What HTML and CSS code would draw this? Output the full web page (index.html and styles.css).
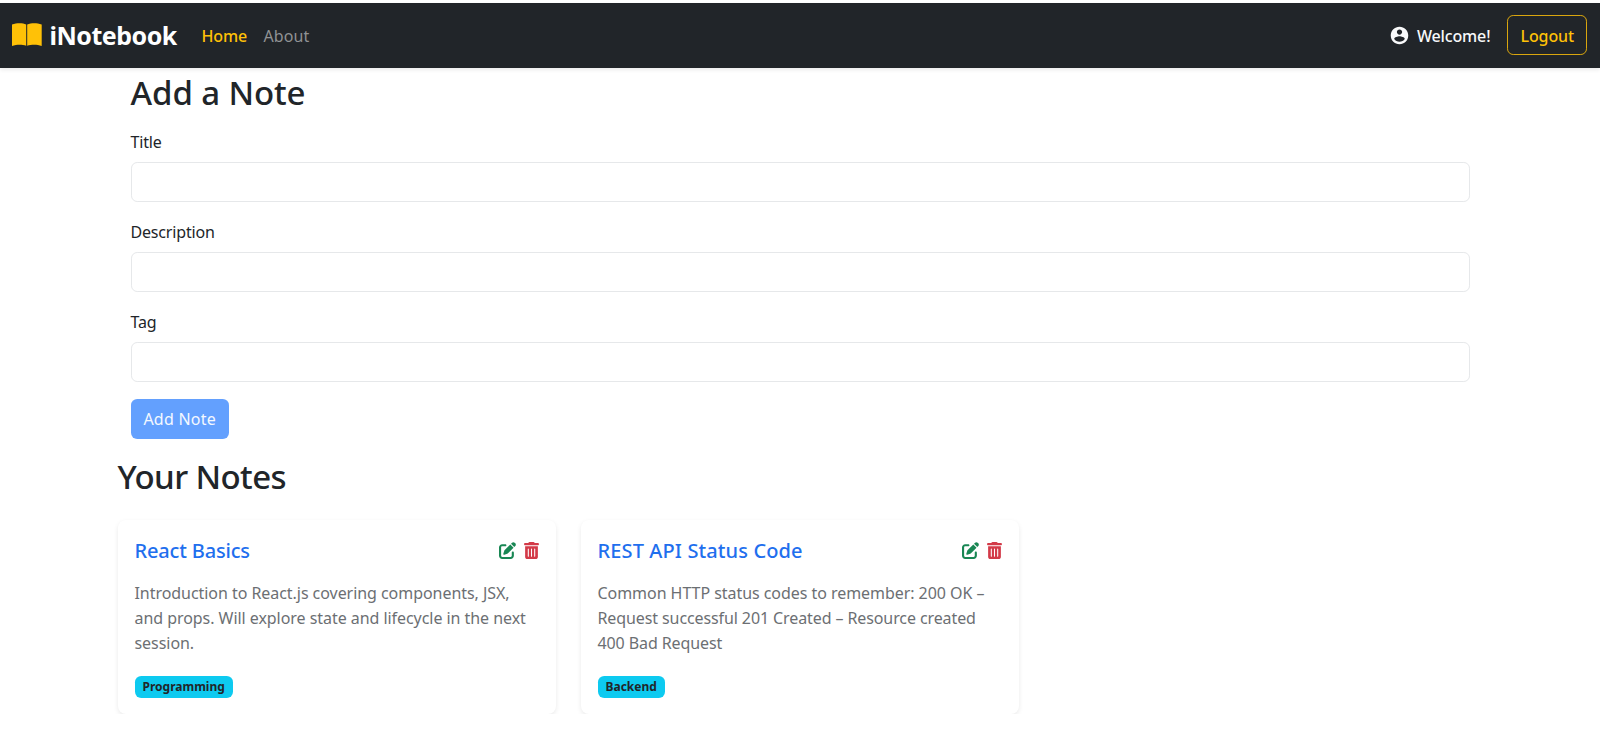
FILE: index.html
```html
<!DOCTYPE html>
<html lang="en">
<head>
<meta charset="utf-8">
<title>iNotebook</title>
<link rel="stylesheet" href="styles.css">
</head>
<body>
<svg class="sprite" aria-hidden="true">
  <symbol id="edit" viewBox="0 0 512 512"><path d="M471.600 21.700c-21.900-21.900-57.300-21.900-79.200 0L362.300 51.700l97.900 97.900 30.100-30.100c21.900-21.900 21.900-57.300 0-79.200L471.600 21.700zm-299.200 220c-6.100 6.100-10.800 13.600-13.500 21.900l-29.600 88.800c-2.900 8.600-.6 18.100 5.800 24.600s15.900 8.700 24.600 5.800l88.800-29.600c8.200-2.700 15.700-7.400 21.900-13.500L437.700 172.300 339.700 74.300 172.400 241.700zM96 64C43 64 0 107 0 160V416c0 53 43 96 96 96H352c53 0 96-43 96-96V320c0-17.700-14.300-32-32-32s-32 14.300-32 32v96c0 17.700-14.300 32-32 32H96c-17.700 0-32-14.300-32-32V160c0-17.700 14.300-32 32-32h96c17.700 0 32-14.300 32-32s-14.300-32-32-32H96z"/></symbol>
  <symbol id="trash" viewBox="0 0 448 512"><path d="M135.200 17.700C140.600 6.800 151.700 0 163.800 0H284.200c12.100 0 23.200 6.800 28.600 17.700L320 32h96c17.700 0 32 14.300 32 32s-14.300 32-32 32H32C14.300 96 0 81.700 0 64S14.300 32 32 32h96l7.200-14.300zM32 128H416V448c0 35.300-28.700 64-64 64H96c-35.300 0-64-28.700-64-64V128zm96 64c-8.800 0-16 7.200-16 16V432c0 8.800 7.200 16 16 16s16-7.200 16-16V208c0-8.800-7.200-16-16-16zm96 0c-8.800 0-16 7.200-16 16V432c0 8.800 7.200 16 16 16s16-7.200 16-16V208c0-8.800-7.200-16-16-16zm96 0c-8.800 0-16 7.200-16 16V432c0 8.800 7.200 16 16 16s16-7.200 16-16V208c0-8.800-7.200-16-16-16z"/></symbol>
</svg>
<nav class="navbar">
  <a class="brand"><svg class="book" viewBox="0 0 30 24"><path d="M0 1.500C2.500.6 5 .3 7.500.3s5 .4 6.700 1.300V22.800C12.300 22 9.800 21.700 7.500 21.700S2.500 22 0 22.900zM15.200 1.600C17.200.7 19.700.3 22.200.3s5 .3 7.500 1.200V22.900C27.200 22 24.700 21.700 22.200 21.700S17.300 22 15.200 22.800z"/></svg><span class="brand-name">iNotebook</span></a>
  <a class="link link-home active">Home</a>
  <a class="link link-about">About</a>
  <div class="account">
    <svg class="user" viewBox="0 0 24 24"><path d="M12 2C6.480 2 2 6.480 2 12s4.480 10 10 10 10-4.480 10-10S17.520 2 12 2zm0 3c1.660 0 3 1.340 3 3s-1.340 3-3 3-3-1.340-3-3 1.340-3 3-3zm0 14.200c-2.500 0-4.710-1.280-6-3.220.030-1.990 4-3.080 6-3.080 1.990 0 5.970 1.090 6 3.080-1.290 1.940-3.500 3.220-6 3.220z"/></svg>
    <span class="welcome">Welcome!</span>
    <button class="btn btn-logout"><span>Logout</span></button>
  </div>
</nav>
<main class="container">
  <form class="note-form">
    <h2 class="add-heading">Add a Note</h2>
    <div class="field"><label for="title">Title</label><input id="title" type="text"></div>
    <div class="field"><label for="description">Description</label><input id="description" type="text"></div>
    <div class="field"><label for="tag">Tag</label><input id="tag" type="text"></div>
    <button class="btn btn-add" type="button" disabled><span>Add Note</span></button>
  </form>
  <h2 class="notes-heading">Your Notes</h2>
  <section class="cards">
    <article class="card">
      <header class="card-head"><h5 class="card-title tight">React Basics</h5><svg class="icon edit"><use href="#edit"/></svg><svg class="icon trash"><use href="#trash"/></svg></header>
      <p class="card-text">Introduction to React.js covering components, JSX,<br>and props. Will explore state and lifecycle in the next<br>session.</p>
      <span class="badge">Programming</span>
    </article>
    <article class="card">
      <header class="card-head"><h5 class="card-title">REST API Status Code</h5><svg class="icon edit"><use href="#edit"/></svg><svg class="icon trash"><use href="#trash"/></svg></header>
      <p class="card-text">Common HTTP status codes to remember: 200 OK –<br><span class="narrow">Request successful 201 Created – Resource created<br>400 Bad Request</span></p>
      <span class="badge">Backend</span>
    </article>
  </section>
</main>
</body>
</html>
```
FILE: styles.css
```css
* { box-sizing: border-box; }
body {
  margin: 0;
  padding-top: 2.5px;
  background: #fff;
  color: #212529;
  font: 400 16px/25px "Noto Sans", "Open Sans", sans-serif;
}
.sprite { display: none; }
h2, h5, p { margin: 0; }

.navbar {
  display: flex;
  align-items: center;
  height: 65.500px;
  padding: 0 13px 0 12px;
  background: #212529;
  box-shadow: 0 2px 4px rgba(0, 0, 0, .08);
}
.brand { display: flex; align-items: center; width: 189.500px; color: #fff; }
.book { width: 30px; height: 24px; margin-right: 7.500px; fill: #ffc107; }
.brand-name { font-size: 25px; font-weight: 700; letter-spacing: -.5px; }
.link { padding-top: 2px; color: #909294; white-space: nowrap; }
.link-home { width: 62px; letter-spacing: -.1px; }
.link-about { letter-spacing: .1px; }
.link.active { color: #ffc107; font-weight: 500; }
.account { display: flex; align-items: center; margin-left: auto; color: #f8f9fa; }
.user { width: 21px; height: 21px; margin-top: 1px; margin-right: 7px; fill: #f8f9fa; }
.welcome { width: 89.500px; padding-top: 2px; font-weight: 500; letter-spacing: -.15px; white-space: nowrap; }

.btn {
  display: flex;
  align-items: center;
  justify-content: center;
  height: 40px;
  padding: 2px 0 0;
  border: 1px solid transparent;
  border-radius: 6.200px;
  background: none;
  font: inherit;
  white-space: nowrap;
}
.btn-logout { width: 80.500px; padding-left: 1px; border-color: #d9a60e; color: #ffc107; font-weight: 500; letter-spacing: -.1px; }

.container { width: 1365px; margin: 0 auto; }
.note-form { padding: 0 12.500px 0 13px; }
h2 { font-size: 33px; line-height: 40px; font-weight: 500; white-space: nowrap; }
.add-heading { height: 60.500px; padding-top: 4.500px; letter-spacing: -.1px; }
.field { display: flex; flex-direction: column; height: 90px; }
label { height: 33px; padding-top: 1px; letter-spacing: -.17px; }
input {
  width: 100%;
  height: 40px;
  border: 1px solid #e6e8ea;
  border-radius: 6.200px;
  background: #fff;
}
.btn-add { width: 98.500px; background: #63a0fe; color: #f4f8ff; letter-spacing: .25px; }
.notes-heading { margin-top: 18px; letter-spacing: -.6px; }

.cards { display: flex; gap: 24.500px; margin-top: 23px; }
.card {
  width: 438.500px;
  height: 194px;
  padding: 17.500px 17px;
  border-radius: 8px;
  background: #fff;
  box-shadow: 0 2px 5px rgba(0, 0, 0, .085);
}
.card-head { display: flex; align-items: center; height: 26px; }
.card-title { flex: 1; font-size: 20px; font-weight: 500; letter-spacing: .12px; color: #1f6fee; white-space: nowrap; }
.card-title.tight { letter-spacing: -.17px; }
.icon { height: 17px; }
.edit { width: 17px; margin-right: 8px; fill: #198754; }
.trash { width: 15px; fill: #d33a48; }
.card-text { margin-top: 17.500px; line-height: 25.400px; letter-spacing: -.05px; color: #6c6f73; white-space: nowrap; }
.narrow { letter-spacing: -.1px; }
.badge {
  display: flex;
  align-items: center;
  width: max-content;
  height: 21.500px;
  margin-top: 19.300px;
  padding: 0 8px;
  border-radius: 6.200px;
  background: #0dcaf0;
  font-size: 12px;
  font-weight: 700;
  line-height: 12px;
}
```
